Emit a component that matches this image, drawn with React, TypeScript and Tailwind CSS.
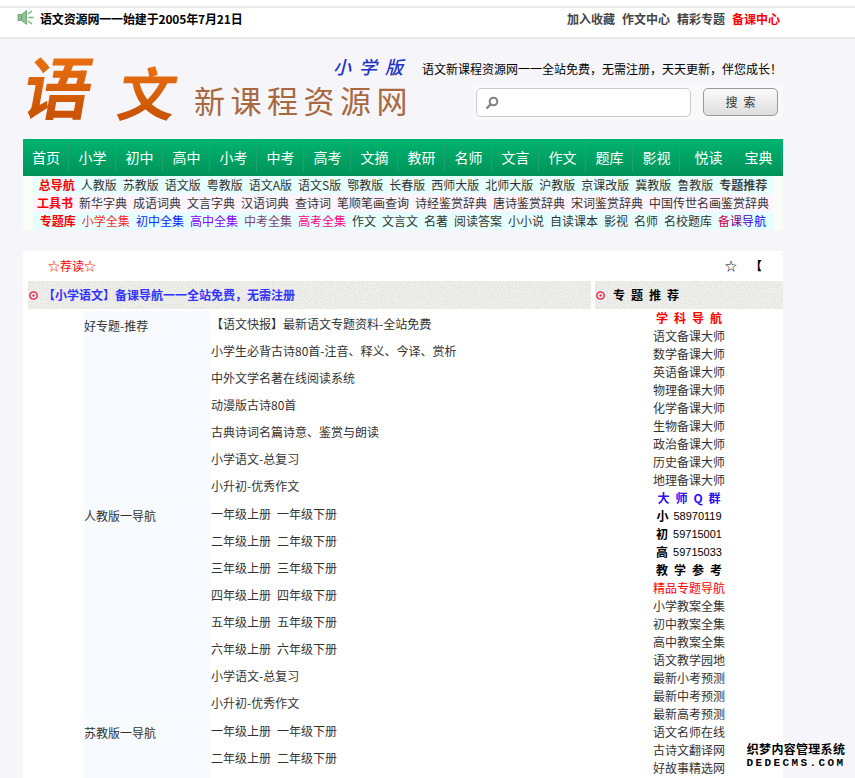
const NAV = ['首页', '小学', '初中', '高中', '小考', '中考', '高考', '文摘', '教研', '名师', '文言', '作文', '题库', '影视'];

const ROW_ONE = ['人教版', '苏教版', '语文版', '粤教版', '语文A版', '语文S版', '鄂教版', '长春版', '西师大版', '北师大版', '沪教版', '京课改版', '冀教版', '鲁教版'];
const ROW_TWO = ['新华字典', '成语词典', '文言字典', '汉语词典', '查诗词', '笔顺笔画查询', '诗经鉴赏辞典', '唐诗鉴赏辞典', '宋词鉴赏辞典', '中国传世名画鉴赏辞典'];
const ROW_THREE_PLAIN = ['作文', '文言文', '名著', '阅读答案', '小小说', '自读课本', '影视', '名师', '名校题库'];

const TOPICS = ['【语文快报】最新语文专题资料-全站免费', '小学生必背古诗80首-注音、释义、今译、赏析', '中外文学名著在线阅读系统', '动漫版古诗80首', '古典诗词名篇诗意、鉴赏与朗读', '小学语文-总复习', '小升初-优秀作文'];
const GRADES = ['一', '二', '三', '四', '五', '六'];

const PREP = ['语文备课大师', '数学备课大师', '英语备课大师', '物理备课大师', '化学备课大师', '生物备课大师', '政治备课大师', '历史备课大师', '地理备课大师'];
const REFS = ['小学教案全集', '初中教案全集', '高中教案全集', '语文教学园地', '最新小考预测', '最新中考预测', '最新高考预测', '语文名师在线', '古诗文翻译网', '好故事精选网'];
const GROUPS = [['小', '58970119'], ['初', '59715001'], ['高', '59715033']];

function Bullet() {
  return (
    <svg width="9" height="9" viewBox="0 0 9 9" className="relative shrink-0">
      <circle cx="4.5" cy="4.5" r="3.7" fill="none" stroke="#f0103c" strokeWidth="1.3" />
      <rect x="3.5" y="3.5" width="2" height="2" fill="#f0103c" />
    </svg>
  );
}

// speckled grey behind the section headings
function Grain({ id }: { id: string }) {
  return (
    <svg className="absolute inset-0 h-full w-full" aria-hidden="true">
      <filter id={id} x="0" y="0" width="100%" height="100%">
        <feTurbulence type="fractalNoise" baseFrequency="0.8" numOctaves="2" seed="4" />
        <feColorMatrix values="0 0 0 0 0.78  0 0 0 0 0.78  0 0 0 0 0.76  0 0 0 7 -3.2" />
      </filter>
      <rect width="100%" height="100%" fill="#efefeb" />
      <rect width="100%" height="100%" filter={`url(#${id})`} />
    </svg>
  );
}

function Speaker() {
  return (
    <svg width="18" height="17" viewBox="0 0 18 17" className="shrink-0">
      <path d="M1 5.5h3.5L9.5 1.5v14L4.500 11.500H1z" fill="#8fc48f" stroke="#5d9a68" strokeWidth="0.8" />
      <path d="M4.500 5.500v6" stroke="#5d9a68" strokeWidth="0.8" />
      <path d="M11.500 8.500h5M11 5l4-3M11 12l4 3" stroke="#6fb274" strokeWidth="1.300" fill="none" />
    </svg>
  );
}

function Logo() {
  return (
    <svg width="399" height="100" viewBox="0 0 399 100" className="block shrink-0">
      <defs>
        <linearGradient id="logoFill" x1="0" y1="0" x2="0" y2="1">
          <stop offset="0" stopColor="#f47a14" />
          <stop offset="1" stopColor="#c04a02" />
        </linearGradient>
      </defs>
      <g fontFamily="'Noto Sans CJK SC', sans-serif">
        <text x="0" y="0" transform="translate(-3 75) skewX(-10)" fontSize="68" fontWeight="700" fill="url(#logoFill)">语</text>
        <text x="0" y="0" transform="translate(92 77) skewX(-10)" fontSize="58" fontWeight="700" fill="url(#logoFill)">文</text>
        <text x="171" y="74" fontSize="31" letterSpacing="5.500" fill="#a8693f">新课程资源网</text>
        <text x="0" y="0" transform="translate(310 35) skewX(-14)" fontSize="18" fontWeight="500" letterSpacing="8" fill="#2430c8">小学版</text>
      </g>
    </svg>
  );
}

function LinkRow({ bg, children }: { bg: string; children: React.ReactNode }) {
  return <div className={`flex h-[18px] items-center justify-center gap-[6px] whitespace-nowrap leading-[18px] ${bg}`}>{children}</div>;
}

function TextRow({ children }: { children: React.ReactNode }) {
  return <div className="flex h-[27px] items-center gap-[6px] whitespace-nowrap pb-[2px]">{children}</div>;
}

function GradeRows() {
  return (
    <>
      {GRADES.map(g => (
        <TextRow key={g}>
          <span>{g}年级上册</span>
          <span>{g}年级下册</span>
        </TextRow>
      ))}
    </>
  );
}

export default function App() {
  return (
    <div className="relative h-[778px] w-[855px] overflow-hidden bg-[#f5f5fa] font-['Noto_Sans_CJK_SC',sans-serif] text-[12px] text-[#333333]">
      <div className="bg-white pt-[6px]">
        <div className="flex h-[33px] border-y-2 border-[#e8e8e8] pl-[17px] pr-[75px] pt-[1px]">
          <Speaker />
          <span className="ml-[5px] mt-[2px] font-bold leading-[16px] tracking-[-0.15px] text-black">语文资源网一一始建于2005年7月21日</span>
          <div className="ml-auto mt-[2px] flex gap-[7px] font-bold leading-[16px] text-[#444444]">
            <span>加入收藏</span>
            <span>作文中心</span>
            <span>精彩专题</span>
            <span className="text-[#ff0000]">备课中心</span>
          </div>
        </div>
      </div>

      <div className="mx-[23px] w-[760px]">
        <div className="flex h-[100px]">
          <Logo />
          <div className="w-[361px]">
            <div className="mt-[22px] whitespace-nowrap leading-[16px] text-black">语文新课程资源网一一全站免费，无需注册，天天更新，伴您成长！</div>
            <div className="ml-[51px] mt-[7px] flex h-[36px] items-start bg-[#f9f9f9] pl-[3px] pt-[4px]">
              <div className="flex h-[29px] w-[215px] items-center rounded-[5px] border border-[#cccccc] bg-white pl-[8px]">
                <svg width="14" height="14" viewBox="0 0 14 14">
                  <circle cx="8.500" cy="5.500" r="3.800" fill="none" stroke="#808080" strokeWidth="2" />
                  <path d="M5.500 8.500L1.500 12.500" stroke="#808080" strokeWidth="2.400" />
                </svg>
              </div>
              <button className="ml-[12px] h-[28px] w-[75px] rounded-[5px] border border-[#999999] bg-gradient-to-b from-[#fafafa] to-[#dedede] pl-[6px] text-[12px] tracking-[6px] text-[#333333]">搜索</button>
            </div>
          </div>
        </div>

        <div className="flex h-[37px] items-start bg-gradient-to-b from-[#00b470] to-[#009259] pt-[4px] text-[14px] leading-[28px] text-white">
          {NAV.map(item => (
            <div key={item} className="w-[47px] shrink-0 border-r border-[#1fa36d] pl-[1px] text-center first:w-[46px]">{item}</div>
          ))}
          <div className="w-[54px] shrink-0 pl-[3px] text-center">悦读</div>
          <div className="w-[48px] shrink-0 border-r border-[#1fa36d] pl-[2px] text-center">宝典</div>
        </div>

        <div className="h-[54px] bg-[#f8fdf8] px-[10px]">
          <LinkRow bg="bg-[#e6ffff]">
            <b className="text-[#ff0000]">总导航</b>
            {ROW_ONE.map(t => <span key={t}>{t}</span>)}
            <b className="text-[#444444]">专题推荐</b>
          </LinkRow>
          <LinkRow bg="bg-[#fff4ff]">
            <b className="text-[#ff0000]">工具书</b>
            {ROW_TWO.map(t => <span key={t}>{t}</span>)}
          </LinkRow>
          <LinkRow bg="bg-[#e6ffff]">
            <b className="text-[#ff0000]">专题库</b>
            <span className="text-[#ff2a2a]">小学全集</span>
            <span className="text-[#0a2aff]">初中全集</span>
            <span className="text-[#8800ff]">高中全集</span>
            <span className="text-[#804070]">中考全集</span>
            <span className="text-[#ff0088]">高考全集</span>
            {ROW_THREE_PLAIN.map(t => <span key={t}>{t}</span>)}
            <span>
              <span className="text-[#cc0055]">备</span>
              <span className="text-[#880088]">课</span>
              <span className="text-[#4400cc]">导</span>
              <span className="text-[#0000ff]">航</span>
            </span>
          </LinkRow>
        </div>

        <div className="mt-[21px] bg-white">
          <div className="flex h-[30px] items-center whitespace-nowrap">
            <span className="ml-[25px] text-[#ff0000]">☆荐读☆</span>
            <span className="ml-auto text-black">☆</span>
            <div className="ml-[13px] mr-[21px] w-[12px] overflow-hidden font-bold text-black">【</div>
          </div>

          <div className="flex">
            <div className="w-[572px] shrink-0">
              <div className="relative ml-[5px] flex h-[28px] w-[563px] items-center gap-[5px] pl-[1px] font-bold text-[#3333ff]">
                <Grain id="grainLeft" />
                <Bullet />
                <span className="relative">【小学语文】备课导航一一全站免费，无需注册</span>
              </div>
              <div className="mt-[2px] flex flex-col gap-[1px] pl-[61px]">
                <div className="flex">
                  <div className="w-[127px] shrink-0 bg-[#f7fafe] pt-[1px] leading-[27px]">好专题-推荐</div>
                  <div>
                    {TOPICS.map(t => <TextRow key={t}>{t}</TextRow>)}
                  </div>
                </div>
                <div className="flex">
                  <div className="w-[127px] shrink-0 bg-[#f7fafe] pt-[1px] leading-[27px]">人教版一导航</div>
                  <div>
                    <GradeRows />
                    <TextRow>小学语文-总复习</TextRow>
                    <TextRow>小升初-优秀作文</TextRow>
                  </div>
                </div>
                <div className="flex">
                  <div className="w-[127px] shrink-0 bg-[#f7fafe] pt-[1px] leading-[27px]">苏教版一导航</div>
                  <div>
                    <GradeRows />
                  </div>
                </div>
              </div>
            </div>

            <div className="w-[188px] shrink-0">
              <div className="relative flex h-[28px] items-center gap-[8px] pl-[1px] font-bold tracking-[6px] text-black">
                <Grain id="grainRight" />
                <Bullet />
                <span className="relative">专题推荐</span>
              </div>
              <div className="flex flex-col items-center whitespace-nowrap leading-[18px]">
                <b className="pl-[6px] tracking-[6px] text-[#ff0000]">学科导航</b>
                {PREP.map(t => <span key={t}>{t}</span>)}
                <b className="pl-[6px] tracking-[6px] text-[#2a10f0]">大师Q群</b>
                {GROUPS.map(([c, n]) => (
                  <div key={c} className="flex gap-[5px] text-black">
                    <b>{c}</b>
                    <span className="font-['Liberation_Sans',sans-serif] text-[11px]">{n}</span>
                  </div>
                ))}
                <b className="pl-[6px] tracking-[6px] text-black">教学参考</b>
                <span className="text-[#ff0000]">精品专题导航</span>
                {REFS.map(t => <span key={t}>{t}</span>)}
              </div>
            </div>
          </div>
        </div>
      </div>

      <div className="absolute left-[746px] top-[742px] w-[100px] whitespace-nowrap text-center font-bold text-black [text-shadow:1px_0_#fff,-1px_0_#fff,0_1px_#fff,0_-1px_#fff]">
        <div className="text-[12px] leading-[14px] tracking-[0.3px]">织梦内容管理系统</div>
        <div className="font-['Liberation_Mono',monospace] text-[11px] leading-[14px] tracking-[2.4px]">DEDECMS.COM</div>
      </div>
    </div>
  );
}
